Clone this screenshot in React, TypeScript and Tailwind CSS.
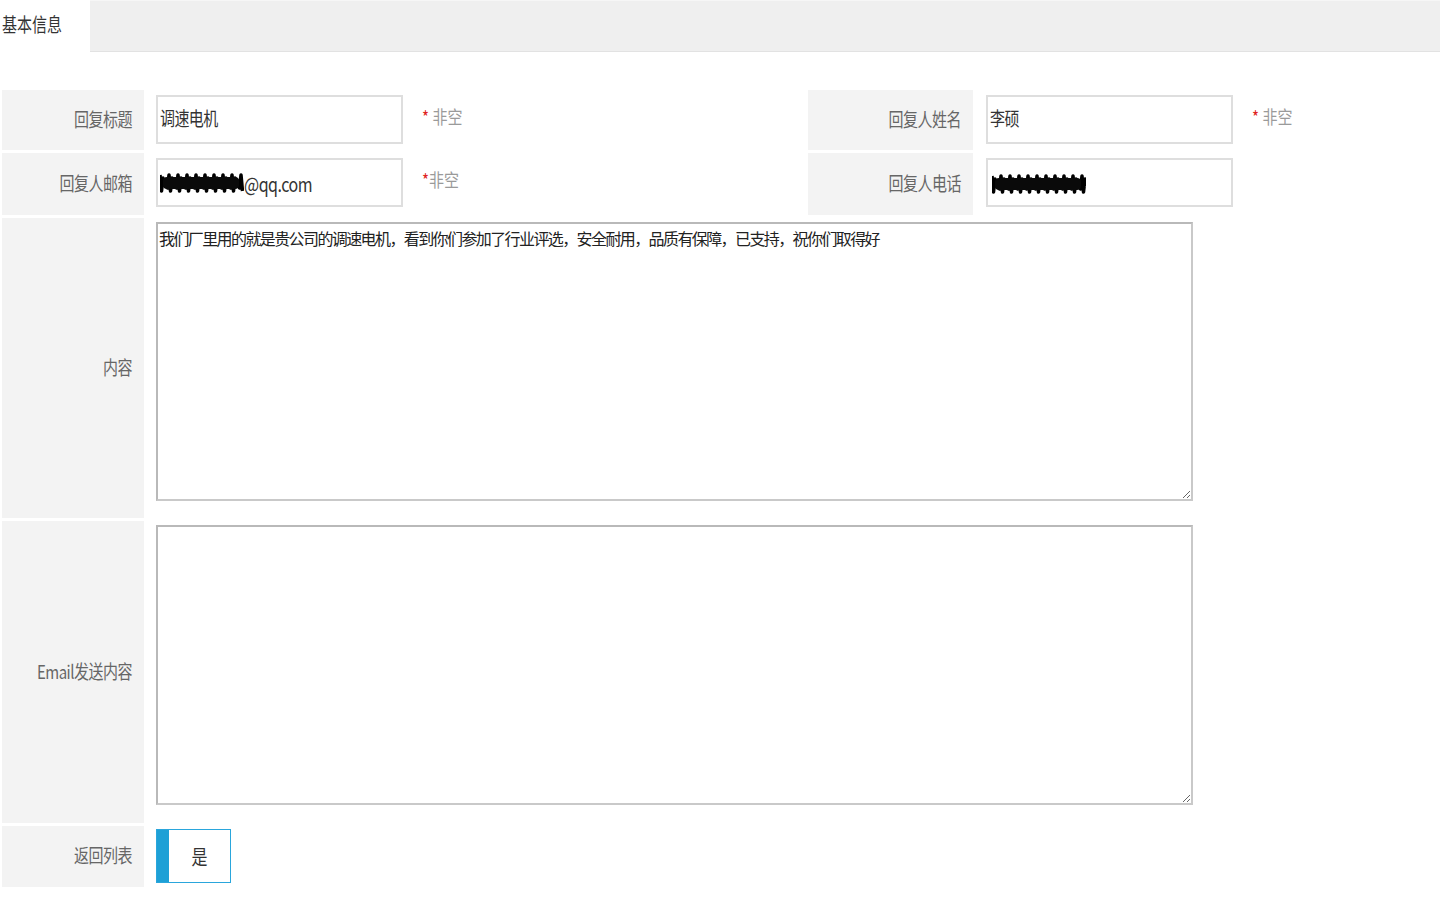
import React from 'react';

const font = { fontFamily: '"Noto Sans CJK SC", "Liberation Sans", sans-serif' };

function Scribble({ width }: { width: number }) {
  // rough black redaction marks over the private data
  const pts: string[] = [];
  for (let i = 0; i < width; i += 3) {
    pts.push(`${i},${3 + ((i * 7) % 9)}`);
    pts.push(`${i + 1.5},${19 - ((i * 5) % 9)}`);
  }
  return (
    <svg width={width} height={22} viewBox={`0 0 ${width} 22`} className="shrink-0">
      <polyline points={pts.join(' ')} fill="none" stroke="#000" strokeWidth={3.5} strokeLinejoin="round" />
      <rect x={3} y={5} width={width - 8} height={12} fill="#0a0a0a" rx={4} />
    </svg>
  );
}

function Tall({ children, className = '' }: { children: React.ReactNode; className?: string }) {
  return <span className={`inline-block scale-y-[1.25] ${className}`}>{children}</span>;
}

function Label({ children, w }: { children: React.ReactNode; w: string }) {
  return (
    <div className={`${w} shrink-0 h-full bg-[#f3f3f3] flex items-center justify-end pr-3 text-[15px] text-[#666] tracking-[-0.5px]`}>
      <Tall>{children}</Tall>
    </div>
  );
}

function Required({ tight }: { tight?: boolean }) {
  return (
    <span className="inline-block scale-y-[1.2] text-[15px] text-[#9a9a9a] ml-[19px] -mt-[4px]">
      <span className="text-[#e02020]">*</span>
      {tight ? '' : ' '}非空
    </span>
  );
}

function TextInput({ children }: { children: React.ReactNode }) {
  return (
    <div className="w-[247px] h-[49px] shrink-0 border-2 border-[#dedede] bg-white flex items-center pl-[2px] text-[15px] text-[#333] tracking-[-0.6px]">
      {children}
    </div>
  );
}

export default function App() {
  return (
    <main className="min-h-screen w-[1440px] bg-white" style={font}>
      {/* tabs */}
      <div className="flex h-[52px]">
        <div className="w-[90px] pl-[2px] pt-[14px] text-[15px] text-[#333]">
          <Tall>基本信息</Tall>
        </div>
        <div className="flex-1 bg-[#efefef] border-t border-[#f6f6f6] border-b border-b-[#e2e2e2]" />
      </div>

      <div className="mt-[38px] flex flex-col gap-[3px]">
        {/* row 1 */}
        <div className="flex h-[60px]">
          <div className="w-[808px] flex items-start pl-[2px]">
            <Label w="w-[142px]">回复标题</Label>
            <div className="ml-3 mt-[5px] flex items-center">
              <TextInput>
                <Tall>调速电机</Tall>
              </TextInput>
              <Required />
            </div>
          </div>
          <div className="flex items-start">
            <Label w="w-[165px]">回复人姓名</Label>
            <div className="ml-[13px] mt-[5px] flex items-center">
              <TextInput>
                <Tall>李硕</Tall>
              </TextInput>
              <Required />
            </div>
          </div>
        </div>

        {/* row 2 */}
        <div className="flex h-[62px]">
          <div className="w-[808px] flex items-start pl-[2px]">
            <Label w="w-[142px]">回复人邮箱</Label>
            <div className="ml-3 mt-[5px] flex items-center">
              <TextInput>
                <Scribble width={84} />
                <Tall className="tracking-[-0.5px] text-[16px]">@qq.com</Tall>
              </TextInput>
              <Required tight />
            </div>
          </div>
          <div className="flex items-start">
            <Label w="w-[165px]">回复人电话</Label>
            <div className="ml-[13px] mt-[5px] flex items-center">
              <TextInput>
                <span className="ml-[2px] mt-[2px] flex">
                  <Scribble width={94} />
                </span>
              </TextInput>
            </div>
          </div>
        </div>

        {/* row 3 */}
        <div className="flex h-[300px] pl-[2px]">
          <Label w="w-[142px]">内容</Label>
          <div className="ml-3 mt-[4px]">
            <textarea
              readOnly
              defaultValue="我们厂里用的就是贵公司的调速电机，看到你们参加了行业评选，安全耐用，品质有保障，已支持，祝你们取得好"
              className="w-[1037px] h-[279px] border-2 border-[#c9c9c9] border-t-[#b9b9b9] border-l-[#b9b9b9] bg-white px-[1px] pt-[3px] text-[16px] leading-[22px] tracking-[-1.6px] text-[#222] outline-none resize"
              style={font}
            />
          </div>
        </div>

        {/* row 4 */}
        <div className="flex h-[302px] pl-[2px]">
          <Label w="w-[142px]">Email发送内容</Label>
          <div className="ml-3 mt-[4px]">
            <textarea
              readOnly
              defaultValue=""
              className="w-[1037px] h-[280px] border-2 border-[#c9c9c9] border-t-[#b9b9b9] border-l-[#b9b9b9] bg-white outline-none resize"
              style={font}
            />
          </div>
        </div>

        {/* row 5 */}
        <div className="flex h-[61px] pl-[2px]">
          <Label w="w-[142px]">返回列表</Label>
          <div className="ml-3 mt-[3px]">
            <button className="w-[75px] h-[54px] flex border-[1.5px] border-[#2aa6dc] bg-white">
              <span className="w-[12px] h-full bg-[#1ea0d6]" />
              <span className="flex-1 flex items-center justify-center text-[16px] text-[#333]">
                <Tall>是</Tall>
              </span>
            </button>
          </div>
        </div>
      </div>
    </main>
  );
}
